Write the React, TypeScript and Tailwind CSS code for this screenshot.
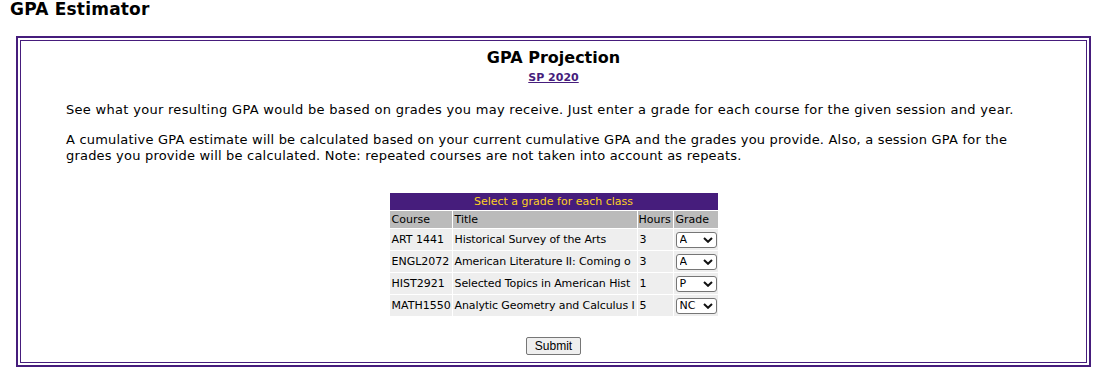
import React from "react";

type Row = { course: string; title: string; hours: string; grade: string };

const rows: Row[] = [
  { course: "ART 1441", title: "Historical Survey of the Arts", hours: "3", grade: "A" },
  { course: "ENGL2072", title: "American Literature II: Coming o", hours: "3", grade: "A" },
  { course: "HIST2921", title: "Selected Topics in American Hist", hours: "1", grade: "P" },
  { course: "MATH1550", title: "Analytic Geometry and Calculus I", hours: "5", grade: "NC" },
];

const grades = ["A", "B", "C", "D", "F", "P", "NC"];

function GradeSelect({ value }: { value: string }) {
  return (
    <div className="relative w-[41px] h-[16px]">
      <select
        defaultValue={value}
        className="appearance-none block w-[41px] h-[16px] border border-[#767676] rounded-[3px] bg-white pl-[3px] pr-[14px] py-0 text-[11px] leading-[14px] text-black font-['DejaVu_Sans',Verdana,sans-serif] outline-none"
      >
        {grades.map((g) => (
          <option key={g} value={g}>
            {g}
          </option>
        ))}
      </select>
      <svg
        className="absolute right-[4px] top-[5px] pointer-events-none"
        width="10"
        height="6"
        viewBox="0 0 10 6"
      >
        <path d="M1 1 L5 4.8 L9 1" fill="none" stroke="#111" strokeWidth="2" />
      </svg>
    </div>
  );
}

export default function App() {
  return (
    <div className="w-[1098px] h-[391px] bg-white text-black font-['DejaVu_Sans',Verdana,sans-serif] overflow-hidden">
      <h1 className="pl-[10px] text-[17px] leading-[18px] font-bold tracking-[0.2px] h-[36px] pt-0">
        GPA Estimator
      </h1>
      <div className="ml-[16px] w-[1075px] h-[331px] border-2 border-[#461D7C] p-[2px]">
        <div className="h-[323px] border border-[#461D7C] flex flex-col">
          <h2 className="mt-[7px] text-[16px] leading-[20px] font-bold text-center">
            GPA Projection
          </h2>
          <div className="mt-[3px] text-center text-[11px] leading-[14px]">
            <a href="#" className="font-bold text-[#461D7C] underline">
              SP 2020
            </a>
          </div>
          <p className="mt-[17px] pl-[45px] text-[13px] leading-[16px] tracking-[0.3px] whitespace-nowrap">
            See what your resulting GPA would be based on grades you may receive. Just enter a grade for each course for the given session and year.
          </p>
          <p className="mt-[14px] pl-[45px] text-[13px] leading-[16px] tracking-[0.2px] whitespace-nowrap">
            A cumulative GPA estimate will be calculated based on your current cumulative GPA and the grades you provide. Also, a session GPA for the
            <br />
            grades you provide will be calculated. Note: repeated courses are not taken into account as repeats.
          </p>
          <div className="mt-[28px] flex justify-center">
            <table className="w-[330px] border-separate border-spacing-[1px] text-[11px] leading-[13px] table-fixed">
              <colgroup>
                <col className="w-[62px]" />
                <col className="w-[184px]" />
                <col className="w-[35px]" />
                <col className="w-[44px]" />
              </colgroup>
              <thead>
                <tr>
                  <th
                    colSpan={4}
                    className="h-[17px] p-0 bg-[#461D7C] text-[#FDD023] font-normal text-center"
                  >
                    Select a grade for each class
                  </th>
                </tr>
                <tr className="bg-[#BBBBBB]">
                  <th className="h-[17px] pl-[2px] pr-0 py-0 font-normal text-left">Course</th>
                  <th className="h-[17px] px-[2px] py-0 font-normal text-left">Title</th>
                  <th className="h-[17px] pl-[1px] pr-0 py-0 font-normal text-left whitespace-nowrap overflow-hidden">Hours</th>
                  <th className="h-[17px] pl-[2px] pr-0 py-0 font-normal text-left">Grade</th>
                </tr>
              </thead>
              <tbody>
                {rows.map((r) => (
                  <tr key={r.course} className="bg-[#EEEEEE]">
                    <td className="h-[21px] pl-[2px] pr-0 py-0 whitespace-nowrap overflow-hidden">{r.course}</td>
                    <td className="h-[21px] pl-[2px] pr-0 py-0 whitespace-nowrap overflow-hidden tracking-[-0.1px]">{r.title}</td>
                    <td className="h-[21px] pl-[2px] pr-0 py-0 whitespace-nowrap">{r.hours}</td>
                    <td className="h-[21px] pl-[2px] pr-0 py-0">
                      <GradeSelect value={r.grade} />
                    </td>
                  </tr>
                ))}
              </tbody>
            </table>
          </div>
          <div className="mt-[20px] flex justify-center">
            <button
              type="button"
              className="h-[18px] px-[8px] border border-[#767676] rounded-[2px] bg-[#EFEFEF] text-[12px] leading-[16px] font-['Liberation_Sans',Arial,sans-serif] text-black"
            >
              Submit
            </button>
          </div>
        </div>
      </div>
    </div>
  );
}
